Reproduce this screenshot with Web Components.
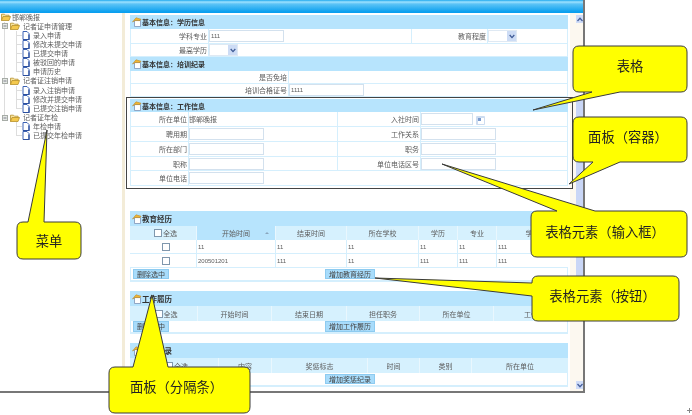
<!DOCTYPE html>
<html lang="zh">
<head>
<meta charset="utf-8">
<title>邯郸晚报</title>
<style>
  html, body { margin: 0; height: 100%; background: #fff; overflow: hidden; }
  body {
    font-family: "Liberation Sans", "Noto Sans CJK SC", sans-serif;
    font-size: 7px;
    color: #5c5c5c;
  }
</style>
</head>
<body>

<app-window>
  <side-tree slot="side">
    <tree-root>邯郸晚报</tree-root>
    <tree-group label="记者证申请管理">
      <tree-leaf>录入申请</tree-leaf>
      <tree-leaf>修改未提交申请</tree-leaf>
      <tree-leaf>已提交申请</tree-leaf>
      <tree-leaf>被驳回的申请</tree-leaf>
      <tree-leaf last>申请历史</tree-leaf>
    </tree-group>
    <tree-group label="记者证注销申请">
      <tree-leaf>录入注销申请</tree-leaf>
      <tree-leaf>修改并提交申请</tree-leaf>
      <tree-leaf last>已提交注销申请</tree-leaf>
    </tree-group>
    <tree-group label="记者证年检" last>
      <tree-leaf>年检申请</tree-leaf>
      <tree-leaf last>已提交年检申请</tree-leaf>
    </tree-group>
  </side-tree>

  <form-panel title="基本信息：学历信息" style="margin-top:2.5px">
    <form-row cols="78px 203px 76px 1fr" h="15">
      <f-label>学科专业</f-label><f-cell><f-input w="75">111</f-input></f-cell>
      <f-label>教育程度</f-label><f-cell><f-select></f-select></f-cell>
    </form-row>
    <form-row cols="78px 1fr" h="13">
      <f-label>最高学历</f-label><f-cell><f-select></f-select></f-cell>
    </form-row>
  </form-panel>

  <form-panel title="基本信息：培训纪录">
    <form-row cols="158px 1fr" h="13">
      <f-label>是否免培</f-label><f-cell></f-cell>
    </form-row>
    <form-row cols="158px 1fr" h="13">
      <f-label>培训合格证号</f-label><f-cell><f-input w="75">1111</f-input></f-cell>
    </form-row>
  </form-panel>

  <form-panel title="基本信息：工作信息" head="13" style="margin-top:2px">
    <form-row cols="58px 149px 83px 1fr" h="15">
      <f-label>所在单位</f-label><f-cell>邯郸晚报</f-cell>
      <f-label>入社时间</f-label><f-cell><f-input w="52"></f-input><date-icon></date-icon></f-cell>
    </form-row>
    <form-row cols="58px 149px 83px 1fr" h="15">
      <f-label>聘用期</f-label><f-cell><f-input w="75"></f-input></f-cell>
      <f-label>工作关系</f-label><f-cell><f-input w="75"></f-input></f-cell>
    </form-row>
    <form-row cols="58px 149px 83px 1fr" h="15">
      <f-label>所在部门</f-label><f-cell><f-input w="75"></f-input></f-cell>
      <f-label>职务</f-label><f-cell><f-input w="75"></f-input></f-cell>
    </form-row>
    <form-row cols="58px 149px 83px 1fr" h="14">
      <f-label>职称</f-label><f-cell><f-input w="75"></f-input></f-cell>
      <f-label>单位电话区号</f-label><f-cell><f-input w="75"></f-input></f-cell>
    </form-row>
    <form-row cols="58px 1fr" h="15">
      <f-label>单位电话</f-label><f-cell><f-input w="75"></f-input></f-cell>
    </form-row>
  </form-panel>

  <data-grid title="教育经历" style="margin-top:25px" head-h="14" foot-h="14" first-pad="5"
    cols="67 79 71 72 39 39 71"
    heads="全选|开始时间|结束时间|所在学校|学历|专业|学历"
    sorted="1"
    rows="11|11|11|11|11|111;200501201|111|11|111|111|111">
    <grid-btn slot="left">删除选中</grid-btn>
    <grid-btn slot="center">增加教育经历</grid-btn>
  </data-grid>

  <data-grid title="工作履历" style="margin-top:9px" head-h="15" foot-h="13" first-pad="5"
    cols="68 74 75 73 74 74"
    heads="全选|开始时间|结束日期|担任职务|所在单位|工作">
    <grid-btn slot="left">删除选中</grid-btn>
    <grid-btn slot="center">增加工作履历</grid-btn>
  </data-grid>

  <data-grid title="奖惩纪录" style="margin-top:9px" head-h="15" foot-h="14" first-pad="5"
    cols="89 53 96 52 52 96"
    heads="全选|内容|奖惩标志|时间|类别|所在单位">
    <grid-btn slot="center">增加奖惩纪录</grid-btn>
  </data-grid>
</app-window>

<mark-box style="left:126px;top:97px;width:445px;height:90px"></mark-box>

<call-out box="17 222 64 37" side="top" tail="28 47 130 44">菜单</call-out>
<call-out box="573 46 114 46" side="bottom" tail="620 533 110 592" dy="-4">表格</call-out>
<call-out box="573 117 114 45" side="bottom" tail="620 569 184 593" dy="-3" dx="-2">面板（容器）</call-out>
<call-out box="531 211 156 46" side="top" tail="557 442 164 595" dy="-3" dx="-4">表格元素（输入框）</call-out>
<call-out box="532 276 147 45" side="left" tail="296 375 278 283" dy="-3" dx="-3">表格元素（按钮）</call-out>
<call-out box="109 367 141 46" side="top" tail="133 152 295 168" dy="-4" dx="-3">面板（分隔条）</call-out>

<corner-mark></corner-mark>

<script>
  const CJK = '"Liberation Sans", "Noto Sans CJK SC", sans-serif';

  // small helper so each class stays short
  function shadow(el, html) {
    el.attachShadow({ mode: 'open' }).innerHTML = html;
  }

  class AppWindow extends HTMLElement {
    constructor() {
      super();
      shadow(this, `
        <style>
          :host {
            display: flex; flex-direction: column;
            width: 583px; height: 391px;
            border-right: 2px solid #777; border-bottom: 2px solid #777;
            background: #fff; overflow: hidden;
            filter: blur(.45px);
          }
          .top {
            flex: 0 0 12.5px;
            background: linear-gradient(#1fa8ee 0, #9fe2ff 2px, #5cc3f6 4px, #0a9fef 12px);
          }
          .mid { flex: 1; display: flex; min-height: 0; }
          .side { flex: 0 0 122px; overflow: hidden; }
          .split { flex: 0 0 3px; background: #f3ecd8; }
          .main { flex: 1; padding-left: 5px; overflow: hidden; display: flex; flex-direction: column; }
        </style>
        <div class="top"></div>
        <div class="mid">
          <div class="side"><slot name="side"></slot></div>
          <div class="split"></div>
          <div class="main"><slot></slot></div>
          <scroll-bar></scroll-bar>
        </div>`);
    }
  }

  class ScrollBar extends HTMLElement {
    constructor() {
      super();
      shadow(this, `
        <style>
          :host { flex: 0 0 13px; display: flex; justify-content: flex-end; background: #fcf8f0; }
          .bar { width: 7px; display: flex; flex-direction: column; padding-top: 2.5px; padding-bottom: 2px; }
          .btn { flex: 0 0 8px; background: #cfdcf8; display: flex; align-items: center; justify-content: center; }
          .track { flex: 1; padding-top: 75px; padding-bottom: 72px; display: flex; }
          .thumb { flex: 1; background: #c9d6f6; }
          svg { display: block; }
        </style>
        <div class="bar">
          <div class="btn"><svg width="6" height="5" viewBox="0 0 6 5"><path d="M.5 4 3 1.3 5.5 4" fill="none" stroke="#47609c" stroke-width="1.3"/></svg></div>
          <div class="track"><div class="thumb"></div></div>
          <div class="btn"><svg width="6" height="5" viewBox="0 0 6 5"><path d="M.5 1 3 3.7 5.5 1" fill="none" stroke="#47609c" stroke-width="1.3"/></svg></div>
        </div>`);
    }
  }

  const FOLDER = `<svg width="10" height="8" viewBox="0 0 10 8"><path d="M.5 7.5V1.2h3l1 1h3.6v1.3" fill="#f7e3a0" stroke="#b8902a" stroke-width=".8"/><path d="M.5 7.5 2 3.5h7.5L8 7.5z" fill="#f4c94e" stroke="#b8902a" stroke-width=".8"/></svg>`;
  const DOC = `<svg width="8" height="9" viewBox="0 0 8 9"><path d="M1 .5h4l2 2v6H1z" fill="#fff" stroke="#3d63b4"/><path d="M1 8.5h6v-5" fill="none" stroke="#2b4f9e" stroke-width="1.2"/></svg>`;
  const EXPAND = `<svg width="6" height="6" viewBox="0 0 6 6"><rect x=".5" y=".5" width="5" height="5" fill="#e4e8e4" stroke="#a7aca7"/><path d="M1.5 3h3" stroke="#667" stroke-width=".8"/></svg>`;

  class SideTree extends HTMLElement {
    constructor() {
      super();
      shadow(this, `
        <style>:host { display: block; color: #5c5c5c; font: 7px/9.15px ${CJK}; }</style>
        <slot></slot>`);
    }
  }

  class TreeRoot extends HTMLElement {
    constructor() {
      super();
      shadow(this, `
        <style>
          :host { display: flex; align-items: center; height: 9.15px; padding-left: 1px; white-space: nowrap; }
          svg { display: block; margin-right: 1px; }
        </style>
        ${FOLDER}<slot></slot>`);
    }
  }

  class TreeGroup extends HTMLElement {
    constructor() {
      super();
      const line = this.hasAttribute('last')
        ? 'linear-gradient(#ddd,#ddd) 4px 0/1px 4px no-repeat'
        : 'linear-gradient(#ddd,#ddd) 4px 0/1px 100% no-repeat';
      shadow(this, `
        <style>
          :host { display: block; background: ${line}; }
          .head { display: flex; align-items: center; height: 9.15px; padding-left: 2px; white-space: nowrap; }
          .head svg { display: block; flex: none; }
          .head svg:first-child { margin-right: 2px; }
          .head span { margin-left: 3px; }
        </style>
        <div class="head">${EXPAND}${FOLDER}<span>${this.getAttribute('label')}</span></div>
        <slot></slot>`);
    }
  }

  class TreeLeaf extends HTMLElement {
    constructor() {
      super();
      const h = this.hasAttribute('last') ? '50%' : '100%';
      shadow(this, `
        <style>
          :host {
            display: flex; align-items: center; height: 9.15px; padding-left: 22px; white-space: nowrap;
            background:
              linear-gradient(#ddd,#ddd) 16px 0/1px ${h} no-repeat,
              linear-gradient(#ddd,#ddd) 16px 50%/6px 1px no-repeat;
          }
          svg { display: block; flex: none; margin-right: 3px; }
        </style>
        ${DOC}<slot></slot>`);
    }
  }

  const NOTE = `<svg width="10" height="10" viewBox="0 0 10 10"><path d="M2.5 3.5h6v6h-6z" fill="#fff" stroke="#7d94b6" stroke-width=".8"/><path d="M.5 5 4 .8l5 1.4-1 1.4H3z" fill="#f2b632" stroke="#b47f18" stroke-width=".5"/></svg>`;

  class FormPanel extends HTMLElement {
    constructor() {
      super();
      const head = this.getAttribute('head') || 14;
      shadow(this, `
        <style>
          :host { display: block; width: 438px; flex: none; }
          .head {
            height: ${head}px; background: #b7e4fd; display: flex; align-items: center; padding-left: 2px;
            font: bold 7px ${CJK}; color: #333; white-space: nowrap;
          }
          svg { display: block; flex: none; }
        </style>
        <div class="head">${NOTE}<span>${this.getAttribute('title')}</span></div>
        <slot></slot>`);
      this.removeAttribute('title');
    }
  }

  class FormRow extends HTMLElement {
    constructor() {
      super();
      shadow(this, `
        <style>
          :host {
            display: grid; grid-template-columns: ${this.getAttribute('cols')};
            height: ${this.getAttribute('h')}px; box-sizing: border-box;
            background: #fff; border: 1px solid #d5effd; border-top: 0;
          }
        </style>
        <slot></slot>`);
    }
  }

  class FLabel extends HTMLElement {
    constructor() {
      super();
      shadow(this, `
        <style>
          :host {
            display: flex; align-items: center; justify-content: flex-end;
            padding-right: 1px; border-right: 1px solid #d5effd; white-space: nowrap; min-width: 0;
          }
        </style>
        <slot></slot>`);
    }
  }

  class FCell extends HTMLElement {
    constructor() {
      super();
      shadow(this, `
        <style>
          :host {
            display: flex; align-items: center; gap: 3px;
            border-right: 1px solid #d5effd; white-space: nowrap; min-width: 0;
          }
          :host(:last-child) { border-right: 0; }
        </style>
        <slot></slot>`);
    }
  }

  class FInput extends HTMLElement {
    constructor() {
      super();
      shadow(this, `
        <style>
          :host {
            display: block; box-sizing: border-box; width: ${this.getAttribute('w')}px; height: 12px;
            border: 1px solid #d3e1ee; background: #fff; font-size: 6px; line-height: 10px; padding-left: 1px;
          }
        </style>
        <slot></slot>`);
    }
  }

  class FSelect extends HTMLElement {
    constructor() {
      super();
      shadow(this, `
        <style>
          :host {
            display: flex; justify-content: flex-end; box-sizing: border-box; width: 29px; height: 12px;
            border: 1px solid #dfe9f3; background: #fff;
          }
          .arrow { width: 9px; background: #cddcf5; display: flex; align-items: center; justify-content: center; }
          svg { display: block; }
        </style>
        <div class="arrow"><svg width="6" height="5" viewBox="0 0 6 5"><path d="M.7 1 3 3.6 5.3 1" fill="none" stroke="#3f5b96" stroke-width="1.3"/></svg></div>`);
    }
  }

  class DateIcon extends HTMLElement {
    constructor() {
      super();
      shadow(this, `
        <style>:host { display: block; width: 9px; height: 9px; margin-top: 2px; } svg { display: block; }</style>
        <svg width="9" height="9" viewBox="0 0 9 9"><rect width="9" height="9" rx="1" fill="#cddcf0"/><rect x="2" y="2" width="6" height="6" fill="#fff"/><rect x="2" y="2" width="3" height="3" fill="#7a9bd0"/></svg>`);
    }
  }

  class GridBtn extends HTMLElement {
    constructor() {
      super();
      shadow(this, `
        <style>
          :host {
            display: inline-block; box-sizing: border-box; height: 10.5px; line-height: 9px; padding: 0 3px;
            background: #a8dcfb; border: 1px solid #8ecbf0; color: #444; white-space: nowrap; text-align: center;
          }
        </style>
        <slot></slot>`);
    }
  }

  const CHECK = size => `<i class="check" style="width:${size}px;height:${size}px"></i>`;

  class DataGrid extends HTMLElement {
    constructor() {
      super();
      const cols = this.getAttribute('cols').split(' ').map(n => n + 'px').join(' ');
      const heads = this.getAttribute('heads').split('|');
      const sorted = this.getAttribute('sorted');
      const pad = this.getAttribute('first-pad') || 0;
      const rows = (this.getAttribute('rows') || '').split(';').filter(Boolean);
      const headCells = heads.map((t, i) => {
        const cls = String(i) === sorted ? 'cell th sorted' : 'cell th';
        const inner = i === 0 ? `${CHECK(8)}<span>${t}</span>` : `<span>${t}</span>`;
        const sort = String(i) === sorted ? '<b class="sort"></b>' : '';
        const st = i === 0 ? ` style="padding-left:${pad}px"` : '';
        return `<div class="${cls}"${st}>${inner}${sort}</div>`;
      }).join('');
      const body = rows.map(r => {
        const cells = r.split('|').map(t => `<div class="cell td">${t}</div>`).join('');
        return `<div class="row body"><div class="cell td mid">${CHECK(8)}</div>${cells}</div>`;
      }).join('');
      shadow(this, `
        <style>
          :host { display: block; width: 438px; flex: none; box-sizing: border-box; }
          .head {
            height: 15px; background: #b7e4fd; display: flex; align-items: center; padding-left: 2px;
            font: bold 7.5px ${CJK}; color: #333; white-space: nowrap;
          }
          .head svg { display: block; flex: none; }
          .row { display: grid; grid-template-columns: ${cols}; box-sizing: border-box; }
          .row.heads { height: ${this.getAttribute('head-h')}px; background: #d6f1fe; }
          .row.body { height: 14px; background: #fff; border-bottom: 1px solid #d5effd; }
          .cell { display: flex; align-items: center; overflow: hidden; white-space: nowrap; border-right: 1px solid #e9f7fe; min-width: 0; box-sizing: border-box; }
          .cell:last-child { border-right: 0; }
          .th { justify-content: center; gap: 1px; position: relative; }
          .th.sorted { background: #b7e4fd; }
          .sort { position: absolute; right: 6px; top: 6px; width: 0; height: 0; border: 2px solid transparent; border-top: 0; border-bottom: 2px solid #8aa6bd; }
          .td { font-size: 6px; padding-left: 1px; border-right: 1px solid #d5effd; }
          .td.mid { justify-content: center; padding-left: 5px; }
          .check { display: block; box-sizing: border-box; border: 1px solid #7f97ad; background: #fff; flex: none; }
          .foot {
            height: ${this.getAttribute('foot-h')}px; box-sizing: border-box; background: #fff;
            border: 1px solid #d5effd; border-width: 0 1px 2px;
            display: grid; grid-template-columns: 1fr auto 1fr; align-items: center; padding-left: 2px;
          }
        </style>
        <div class="head">${NOTE}<span>${this.getAttribute('title')}</span></div>
        <div class="row heads">${headCells}</div>
        ${body}
        <div class="foot">
          <div><slot name="left"></slot></div>
          <slot name="center"></slot>
          <div></div>
        </div>`);
      this.removeAttribute('title');
    }
  }

  // annotation rectangle drawn over the screenshot
  class MarkBox extends HTMLElement {
    constructor() {
      super();
      shadow(this, `<style>:host { display: block; position: absolute; border: 1.5px solid #444; filter: blur(.3px); pointer-events: none; }</style>`);
    }
  }

  // yellow speech bubble, tail goes on one side of the box
  class CallOut extends HTMLElement {
    constructor() {
      super();
      const [x, y, w, h] = this.getAttribute('box').split(' ').map(Number);
      const [a, tx, ty, b] = this.getAttribute('tail').split(' ').map(Number);
      const side = this.getAttribute('side');
      const dy = this.getAttribute('dy') || 0;
      const dx = this.getAttribute('dx') || 0;
      const r = 6;
      const tipX = tx - x, tipY = ty - y;
      const T = side === 'top' ? `L${a - x} 0L${tipX} ${tipY}L${b - x} 0` : '';
      const B = side === 'bottom' ? `L${a - x} ${h}L${tipX} ${tipY}L${b - x} ${h}` : '';
      const L = side === 'left' ? `L0 ${a - y}L${tipX} ${tipY}L0 ${b - y}` : '';
      const d = `M${r} 0${T}L${w - r} 0Q${w} 0 ${w} ${r}L${w} ${h - r}Q${w} ${h} ${w - r} ${h}${B}L${r} ${h}Q0 ${h} 0 ${h - r}${L}L0 ${r}Q0 0 ${r} 0Z`;
      shadow(this, `
        <style>
          :host {
            display: flex; align-items: center; justify-content: center;
            position: absolute; left: ${x}px; top: ${y}px; width: ${w}px; height: ${h}px;
            font: 13.3px ${CJK}; color: #222; white-space: nowrap;
            filter: blur(.35px);
          }
          svg { position: absolute; left: 0; top: 0; overflow: visible; }
          span { position: relative; top: ${dy}px; left: ${dx}px; }
        </style>
        <svg width="${w}" height="${h}"><path d="${d}" fill="#ffff00" stroke="#3a3a3a" stroke-width="1"/></svg>
        <span><slot></slot></span>`);
    }
  }

  class CornerMark extends HTMLElement {
    constructor() {
      super();
      shadow(this, `
        <style>:host { position: absolute; right: 0; bottom: 2px; width: 5px; height: 5px; } svg { display: block; }</style>
        <svg width="5" height="5" viewBox="0 0 5 5"><path d="M2.5 0v5M0 2.5h5" stroke="#888" stroke-width="1"/></svg>`);
    }
  }

  customElements.define('app-window', AppWindow);
  customElements.define('scroll-bar', ScrollBar);
  customElements.define('side-tree', SideTree);
  customElements.define('tree-root', TreeRoot);
  customElements.define('tree-group', TreeGroup);
  customElements.define('tree-leaf', TreeLeaf);
  customElements.define('form-panel', FormPanel);
  customElements.define('form-row', FormRow);
  customElements.define('f-label', FLabel);
  customElements.define('f-cell', FCell);
  customElements.define('f-input', FInput);
  customElements.define('f-select', FSelect);
  customElements.define('date-icon', DateIcon);
  customElements.define('grid-btn', GridBtn);
  customElements.define('data-grid', DataGrid);
  customElements.define('mark-box', MarkBox);
  customElements.define('call-out', CallOut);
  customElements.define('corner-mark', CornerMark);
</script>
</body>
</html>
